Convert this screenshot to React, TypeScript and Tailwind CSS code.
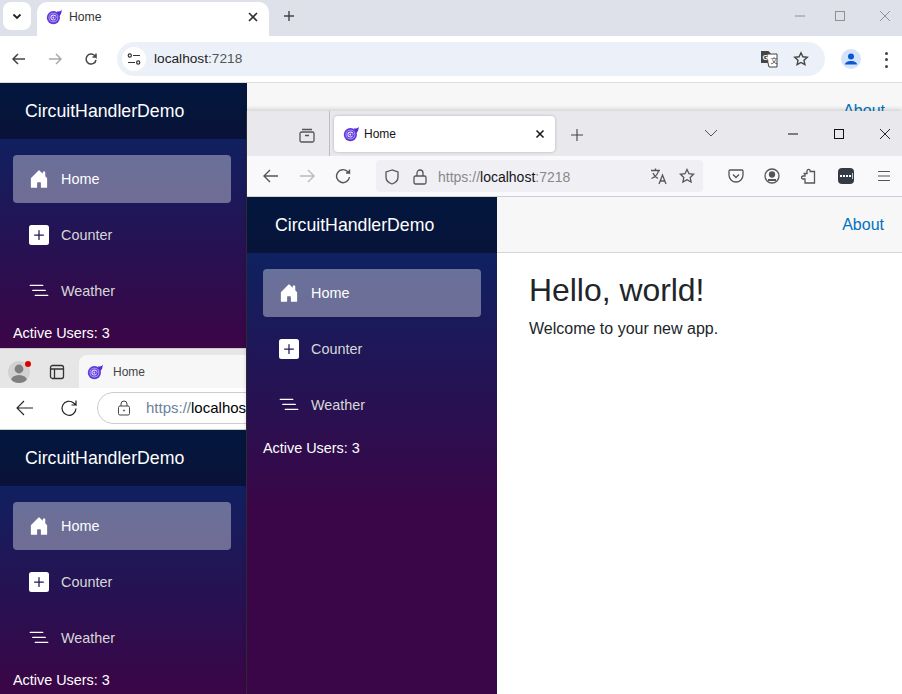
import React from "react";

function Blazor({ className = "" }: { className?: string }) {
  return (
    <svg viewBox="0 0 16 16" className={className}>
      <path d="M15.600 .6C15 2.400 13.400 3 10.800 2.200L12.600 7.600C15 6.400 15.900 3 15.600 .6Z" fill="#512bd4" />
      <circle cx="7.400" cy="8.600" r="6.600" fill="#5f38de" />
      <circle cx="7.400" cy="8.600" r="4.900" fill="#b9a8f2" />
      <circle cx="7.400" cy="8.600" r="4" fill="#5f38de" />
      <circle cx="7.400" cy="8.600" r="3" fill="#e4defa" />
      <circle cx="7.400" cy="8.600" r="1.500" fill="none" stroke="#512bd4" strokeWidth="1" />
      <path d="M9 7v2.400c0 1 1.800 1 2-.6" fill="none" stroke="#512bd4" strokeWidth=".9" />
    </svg>
  );
}

function NavIcon({ kind }: { kind: "home" | "plus" | "list" }) {
  const d = {
    home: "M6.500 14.500v-3.505c0-.245.25-.495.5-.495h2c.25 0 .5.25.5.5v3.500a.5.5 0 0 0 .5.5h4a.5.5 0 0 0 .5-.5v-7a.5.5 0 0 0-.146-.354L13 5.793V2.500a.5.5 0 0 0-.5-.5h-1a.5.5 0 0 0-.5.5v1.293L8.354 1.146a.5.5 0 0 0-.708 0l-6 6A.5.5 0 0 0 1.500 7.500v7a.5.5 0 0 0 .5.5h4a.5.5 0 0 0 .5-.5z",
    plus: "M2 0a2 2 0 0 0-2 2v12a2 2 0 0 0 2 2h12a2 2 0 0 0 2-2V2a2 2 0 0 0-2-2H2zm6.500 4.500v3h3a.5.5 0 0 1 0 1h-3v3a.5.5 0 0 1-1 0v-3h-3a.5.5 0 0 1 0-1h3v-3a.5.5 0 0 1 1 0z",
    list: "M4.500 11.500A.5.5 0 0 1 5 11h10a.5.5 0 0 1 0 1H5a.5.5 0 0 1-.5-.5zm-2-4A.5.5 0 0 1 3 7h10a.5.5 0 0 1 0 1H3a.5.5 0 0 1-.5-.5zm-2-4A.5.5 0 0 1 1 3h10a.5.5 0 0 1 0 1H1a.5.5 0 0 1-.5-.5z",
  }[kind];
  return (
    <svg viewBox="0 0 16 16" className="w-5 h-5 mr-3 -mt-px shrink-0" fill="white">
      <path fillRule="evenodd" d={d} />
    </svg>
  );
}

function Sidebar({ className, usersClass = "" }: { className: string; usersClass?: string }) {
  return (
    <div className={`w-[250px] shrink-0 font-['Liberation_Sans',Arial,sans-serif] ${className}`}>
      <div className="h-14 bg-black/40 flex items-center pl-7 pt-px text-white text-[17.7px] leading-none">CircuitHandlerDemo</div>
      <div className="pt-4">
        {[
          ["Home", "home", true],
          ["Counter", "plus", false],
          ["Weather", "list", false],
        ].map(([label, kind, active]) => (
          <div key={label as string} className="px-4 pb-2 h-14">
            <div className={`h-12 rounded flex items-center pl-4 pt-px text-[14.4px] ${active ? "bg-white/[.37] text-white" : "text-[#d7d7d7]"}`}>
              <NavIcon kind={kind as "home" | "plus" | "list"} />
              <span>{label as string}</span>
            </div>
          </div>
        ))}
        <div className={`px-4 text-white text-[14.4px] leading-5 ${usersClass}`}>Active Users: 3</div>
      </div>
    </div>
  );
}

const ic = "fill-none stroke-current";

function ChromeWindow() {
  return (
    <div className="absolute left-0 top-0 w-[902px] h-[420px] bg-white">
      <div className="h-9 bg-[#dee1e9] relative flex items-end font-['Liberation_Sans',Arial,sans-serif]">
        <div className="absolute left-[3px] top-[2px] w-7 h-7 rounded-lg bg-white flex items-center justify-center">
          <svg viewBox="0 0 12 12" className={`w-3 h-3 text-[#222] ${ic}`} strokeWidth="1.800"><path d="M2.500 4.500 6 8l3.500-3.500" /></svg>
        </div>
        <div className="ml-[37px] w-[232px] h-[34px] bg-white rounded-t-[10px] flex items-center pb-[4px] pl-[9px] pr-[10px] text-[12.2px] text-[#333]">
          <Blazor className="w-4 h-4 mr-[7px]" />
          <span className="flex-1">Home</span>
          <svg viewBox="0 0 12 12" className={`w-3 h-3 text-[#333] ${ic}`} strokeWidth="1.700"><path d="M2 2l8 8M10 2l-8 8" /></svg>
        </div>
        <svg viewBox="0 0 12 12" className={`absolute left-[283px] top-[10px] w-3 h-3 text-[#444] ${ic}`} strokeWidth="1.400"><path d="M6 1v10M1 6h10" /></svg>
        <div className="absolute right-0 top-0 h-full">
          <svg viewBox="0 0 12 12" className={`absolute right-[96px] top-[10px] w-3 h-3 text-[#888] ${ic}`} strokeWidth="0.900"><path d="M1 6h10" /></svg>
          <svg viewBox="0 0 12 12" className={`absolute right-[56px] top-[10px] w-3 h-3 text-[#888] ${ic}`} strokeWidth="0.900"><rect x="1.500" y="1.500" width="9" height="9" /></svg>
          <svg viewBox="0 0 12 12" className={`absolute right-[11px] top-[10px] w-3 h-3 text-[#888] ${ic}`} strokeWidth="0.900"><path d="M1 1l10 10M11 1 1 11" /></svg>
        </div>
      </div>
      <div className="h-[47px] border-b border-[#dcdcdc] flex items-center relative font-['Liberation_Sans',Arial,sans-serif]">
        <svg viewBox="0 0 16 16" className={`absolute left-[11px] top-[15px] w-4 h-4 text-[#444] ${ic}`} strokeWidth="1.500"><path d="M14 8H2M7 3 2 8l5 5" /></svg>
        <svg viewBox="0 0 16 16" className={`absolute left-[47px] top-[15px] w-4 h-4 text-[#aaa] ${ic}`} strokeWidth="1.500"><path d="M2 8h12M9 3l5 5-5 5" /></svg>
        <svg viewBox="0 0 16 16" className={`absolute left-[83px] top-[15px] w-4 h-4 text-[#444] ${ic}`} strokeWidth="1.500"><path d="M13 9a5 5 0 1 1-1.400-4.500L13 6V2.500M13 6H9.500" /></svg>
        <div className="absolute left-[117px] top-[6px] w-[708px] h-[34px] rounded-full bg-[#ecf1f9] flex items-center pl-[5px] text-[13.7px] text-[#555]">
          <div className="w-6 h-6 rounded-full bg-white flex items-center justify-center mr-[8px]">
            <svg viewBox="0 0 16 16" className={`w-4 h-4 text-[#333] ${ic}`} strokeWidth="1.200"><path d="M7 4.500h7M2 11.500h7" /><circle cx="3.800" cy="4.500" r="1.600" /><circle cx="12.200" cy="11.500" r="1.600" /></svg>
          </div>
          <span><span className="text-[#222]">localhost</span>:7218</span>
        </div>
        <svg viewBox="0 0 18 18" className="absolute left-[760px] top-[14px] w-[18px] h-[18px]">
          <path d="M1 1h7.500l3 3.500V13H1.600A.6.6 0 0 1 1 12.400z" fill="#444" />
          <path d="M7 4h10v13H9l-1-4z" fill="#fff" stroke="#444" strokeWidth="1" />
          <text x="2.500" y="10" fontSize="7.500" fontWeight="700" fill="#fff" fontFamily="Liberation Sans">G</text>
          <text x="10.500" y="13" fontSize="7" fill="#444" fontFamily="Noto Sans CJK SC">文</text>
        </svg>
        <svg viewBox="0 0 16 16" className={`absolute left-[793px] top-[15px] w-4 h-4 text-[#444] ${ic}`} strokeWidth="1.400"><path d="m8 1.800 1.900 4 4.400.5-3.300 3 .9 4.400L8 11.500l-3.900 2.200.9-4.400-3.300-3 4.400-.5z" /></svg>
        <div className="absolute left-[841px] top-[13px] w-5 h-5 rounded-full bg-[#d3e3fd] overflow-hidden">
          <svg viewBox="0 0 20 20" className="w-5 h-5" fill="#0b57d0"><circle cx="10" cy="7.600" r="3" /><path d="M4 15.500c0-2.400 2.800-3.600 6-3.600s6 1.200 6 3.600z" /></svg>
        </div>
        <div className="absolute left-[885px] top-[16px] flex flex-col gap-[3.400px]">
          <div className="w-[3px] h-[3px] rounded-full bg-[#444]" />
          <div className="w-[3px] h-[3px] rounded-full bg-[#444]" />
          <div className="w-[3px] h-[3px] rounded-full bg-[#444]" />
        </div>
      </div>
      <div className="h-[337px] flex overflow-hidden">
        <div className="w-[247px] overflow-hidden shrink-0"><Sidebar className="-ml-[3px] h-[367px] bg-[linear-gradient(180deg,#052767_0%,#3a0647_70%)]" /></div>
        <div className="flex-1 h-14 bg-[#f7f7f7] border-b border-[#d6d5d5] flex items-center justify-end pr-[17px] text-[#0071c1] text-[16px] font-['Liberation_Sans',Arial,sans-serif]">About</div>
      </div>
    </div>
  );
}

function EdgeWindow() {
  return (
    <div className="absolute left-0 top-[348px] w-[247px] h-[346px] overflow-hidden bg-white font-['Liberation_Sans',Arial,sans-serif]">
      <div className="h-[40px] bg-[#e6e6e6] border-t border-[#ccc] relative">
        <div className="absolute left-2 top-[12px] w-[22px] h-[22px] rounded-full bg-[#d2d2d2] overflow-hidden">
          <svg viewBox="0 0 22 22" className="w-[22px] h-[22px]" fill="#7f7f7f"><circle cx="11" cy="8" r="4.400" /><ellipse cx="11" cy="19.500" rx="8" ry="5.500" /></svg>
        </div>
        <div className="absolute left-[25px] top-[12px] w-[6px] h-[6px] rounded-full bg-[#e00000]" />
        <svg viewBox="0 0 16 16" className={`absolute left-[49px] top-[15px] w-4 h-4 text-[#333] ${ic}`} strokeWidth="1.300"><rect x="1.500" y="1.500" width="13" height="13" rx="2" /><path d="M1.500 5h13M5.500 5v9.500" /></svg>
        <div className="absolute left-[79px] top-[6px] w-[180px] h-[33px] rounded-t-lg bg-[#f7f7f7] flex items-center pl-[8px] text-[12px] text-[#444]">
          <Blazor className="w-4 h-4 mr-[10px]" />
          <span>Home</span>
        </div>
      </div>
      <div className="h-[42px] bg-white border-b border-[#ccc] relative">
        <svg viewBox="0 0 18 18" className={`absolute left-[16px] top-[11px] w-[18px] h-[18px] text-[#222] ${ic}`} strokeWidth="1.100"><path d="M17 9H1M8 2 1 9l7 7" /></svg>
        <svg viewBox="0 0 18 18" className={`absolute left-[60px] top-[11px] w-[18px] h-[18px] text-[#222] ${ic}`} strokeWidth="1.200"><path d="M16 9.500A7 7 0 1 1 13.600 4L16 6V1.500M16 6h-4.500" /></svg>
        <div className="absolute left-[97px] top-[4px] w-[220px] h-[32px] rounded-full border border-[#ccc] flex items-center pl-[19px] text-[15px] text-[#6b8299] whitespace-nowrap">
          <svg viewBox="0 0 14 16" className={`w-[14px] h-4 mr-[15px] text-[#444] ${ic}`} strokeWidth="1"><rect x="1.500" y="6" width="11" height="9" rx="1.500" /><path d="M4 6V4a3 3 0 0 1 6 0v2" /><circle cx="7" cy="10.500" r=".6" /></svg>
          <span>https://<span className="text-black">localhost</span></span>
        </div>
      </div>
      <div className="h-[264px] overflow-hidden"><Sidebar className="-ml-[3px] h-[367px] bg-[linear-gradient(180deg,#052767_0%,#3a0647_70%)]" /></div>
    </div>
  );
}

function FirefoxWindow() {
  return (
    <div className="absolute left-[246px] top-[111px] w-[656px] h-[583px] overflow-hidden bg-white border-l border-[#2b2b33] font-['Liberation_Sans',Arial,sans-serif] shadow-[0_-2px_4px_rgba(0,0,0,0.15)]">
      <div className="h-[45px] bg-[#e9e9ed] relative">
        <svg viewBox="0 0 16 16" className={`absolute left-[52px] top-[16px] w-4 h-4 text-[#555] ${ic}`} strokeWidth="1.300"><rect x="1" y="5" width="14" height="10" rx="1.500" /><path d="M3 2.500h10M6 8.500h4" /></svg>
        <div className="absolute left-[82px] top-0 bottom-0 w-px bg-[#bdbdbd]" />
        <div className="absolute left-[87px] top-[5px] w-[221px] h-9 rounded bg-white shadow-[0_0_3px_rgba(0,0,0,0.25)] flex items-center pl-[9px] pr-[9px] text-[12px] text-[#15141a]">
          <Blazor className="w-4 h-4 mr-[5px]" />
          <span className="flex-1">Home</span>
          <svg viewBox="0 0 12 12" className={`w-3 h-3 text-[#15141a] ${ic}`} strokeWidth="1.500"><path d="M2.500 2.500l7 7M9.500 2.500l-7 7" /></svg>
        </div>
        <svg viewBox="0 0 14 14" className={`absolute left-[323px] top-[17px] w-[14px] h-[14px] text-[#444] ${ic}`} strokeWidth="1.100"><path d="M7 1v12M1 7h12" /></svg>
        <svg viewBox="0 0 14 8" className={`absolute left-[457px] top-[18px] w-[14px] h-2 text-[#555] ${ic}`} strokeWidth="1"><path d="m1 1 6 6 6-6" /></svg>
        <svg viewBox="0 0 12 12" className={`absolute left-[540px] top-[17px] w-3 h-3 text-[#111] ${ic}`} strokeWidth="1"><path d="M1 6h10" /></svg>
        <svg viewBox="0 0 12 12" className={`absolute left-[586px] top-[17px] w-3 h-3 text-[#111] ${ic}`} strokeWidth="1"><rect x="1.500" y="1.500" width="9" height="9" /></svg>
        <svg viewBox="0 0 12 12" className={`absolute left-[632px] top-[17px] w-3 h-3 text-[#111] ${ic}`} strokeWidth="0.900"><path d="M1 1l10 10M11 1 1 11" /></svg>
      </div>
      <div className="h-[41px] bg-[#f9f9fb] border-b border-[#cfcfd8] relative">
        <svg viewBox="0 0 16 16" className={`absolute left-[16px] top-[12px] w-4 h-4 text-[#555] ${ic}`} strokeWidth="1.400"><path d="M15 8H1M7 2 1 8l6 6" /></svg>
        <svg viewBox="0 0 16 16" className={`absolute left-[52px] top-[12px] w-4 h-4 text-[#bbb] ${ic}`} strokeWidth="1.400"><path d="M1 8h14M9 2l6 6-6 6" /></svg>
        <svg viewBox="0 0 16 16" className={`absolute left-[88px] top-[12px] w-4 h-4 text-[#555] ${ic}`} strokeWidth="1.400"><path d="M14.500 9A6.500 6.500 0 1 1 12.500 3.400L14.500 5V1.500M14.500 5H11" /></svg>
        <div className="absolute left-[129px] top-[4px] w-[327px] h-8 rounded bg-[#f0f0f4] flex items-center pt-[2px] pl-[8px] text-[14px] text-[#888]">
          <svg viewBox="0 0 16 16" className={`w-4 h-4 mr-[13px] text-[#555] ${ic}`} strokeWidth="1.300"><path d="M8 1 2 3v5c0 3.600 3 6 6 7 3-1 6-3.400 6-7V3z" /></svg>
          <svg viewBox="0 0 14 16" className={`w-[14px] h-4 mr-[11px] text-[#555] ${ic}`} strokeWidth="1.300"><rect x="1" y="7" width="12" height="8" rx="1.500" /><path d="M4 7V4a3 3 0 0 1 6 0v3" /></svg>
          <span>https://<span className="text-[#15141a]">localhost</span>:7218</span>
        </div>
        <svg viewBox="0 0 18 18" className={`absolute left-[403px] top-[11px] w-[18px] h-[18px] text-[#555] ${ic}`} strokeWidth="1.300"><path d="M1 3.500h9M5.500 1.500v2M8.500 3.500C8 7 5 10 1.500 11.500M3 6c1 2.500 3 4.500 5 5.500M9 17l3.500-9 3.500 9M10.200 14h4.600" /></svg>
        <svg viewBox="0 0 16 16" className={`absolute left-[432px] top-[12px] w-4 h-4 text-[#555] ${ic}`} strokeWidth="1.300"><path d="m8 1.500 2 4.200 4.600.6-3.400 3.200.9 4.600L8 11.800l-4.100 2.300.9-4.600L1.400 6.300 6 5.700z" /></svg>
        <svg viewBox="0 0 16 16" className={`absolute left-[481px] top-[12px] w-4 h-4 text-[#555] ${ic}`} strokeWidth="1.300"><path d="M2 2h12a1 1 0 0 1 1 1v4a7 7 0 0 1-14 0V3a1 1 0 0 1 1-1z" /><path d="m5 6.500 3 3 3-3" /></svg>
        <svg viewBox="0 0 16 16" className={`absolute left-[517px] top-[12px] w-4 h-4 text-[#555] ${ic}`} strokeWidth="1.300"><circle cx="8" cy="8" r="7" /><circle cx="8" cy="6.500" r="2.500" fill="currentColor" /><path d="M4 12h8" strokeWidth="2" /></svg>
        <svg viewBox="0 0 16 16" className={`absolute left-[554px] top-[12px] w-4 h-4 text-[#555] ${ic}`} strokeWidth="1.300"><path d="M2.500 5.500H6V3a1.600 1.600 0 0 1 3.200 0v.5H13.500v11.500H4V11H2a1.500 1.500 0 0 1 0-3h2V5.500z" /></svg>
        <div className="absolute left-[591px] top-[12px] w-4 h-4 rounded-sm bg-[#343b47] flex items-center justify-center gap-px">
          <div className="w-[2px] h-[2px] bg-white" /><div className="w-[2px] h-[2px] bg-white" /><div className="w-[2px] h-[2px] bg-white" /><div className="w-[2px] h-[2px] bg-white" /><div className="w-px h-[6px] bg-white/70" />
        </div>
        <svg viewBox="0 0 14 12" className={`absolute left-[630px] top-[14px] w-[14px] h-3 text-[#555] ${ic}`} strokeWidth="1.100"><path d="M1 1.500h12M1 6h12M1 10.500h12" /></svg>
      </div>
      <div className="h-[497px] flex">
        <Sidebar usersClass="pt-px" className="h-full bg-[linear-gradient(180deg,#052767_0px,#3a0647_313px)]" />
        <div className="flex-1 min-w-0">
          <div className="h-14 bg-[#f7f7f7] border-b border-[#d6d5d5] flex items-center justify-end pr-[18px] text-[#0071c1] text-[16px]">About</div>
          <div className="pl-8 pt-[18px] text-[#212529]">
            <h1 className="text-[31.9px] leading-[38px] mb-2 font-normal">Hello, world!</h1>
            <p className="text-[16px] leading-6">Welcome to your new app.</p>
          </div>
        </div>
      </div>
    </div>
  );
}

export default function App() {
  return (
    <div className="relative w-[902px] h-[694px] overflow-hidden bg-white">
      <ChromeWindow />
      <EdgeWindow />
      <FirefoxWindow />
    </div>
  );
}
